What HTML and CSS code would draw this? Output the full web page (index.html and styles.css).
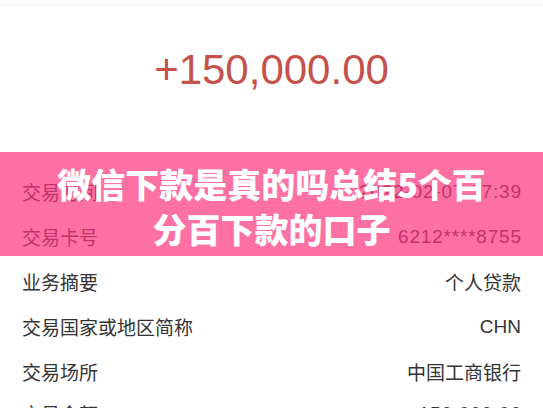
FILE: index.html
```html
<!DOCTYPE html>
<html lang="zh-CN">
<head>
<meta charset="utf-8">
<link rel="stylesheet" href="styles.css">
</head>
<body>
<div class="page">
  <div class="topbar"></div>
  <div class="amount">+150,000.00</div>
  <div class="rows">
    <div class="row"><span class="label">交易时间</span><span class="value num">2022-02-07 17:39</span></div>
    <div class="row"><span class="label">交易卡号</span><span class="value num">6212****8755</span></div>
    <div class="row"><span class="label">业务摘要</span><span class="value">个人贷款</span></div>
    <div class="row"><span class="label">交易国家或地区简称</span><span class="value">CHN</span></div>
    <div class="row"><span class="label">交易场所</span><span class="value">中国工商银行</span></div>
    <div class="row"><span class="label">交易金额</span><span class="value num">150,000.00</span></div>
  </div>
  <div class="banner">
    <div class="banner-title">微信下款是真的吗总结5个百<br>分百下款的口子</div>
  </div>
</div>
</body>
</html>
```
FILE: styles.css
```css
html, body {
  margin: 0;
  padding: 0;
  background: #ffffff;
}
.page {
  position: relative;
  width: 543px;
  height: 408px;
  overflow: hidden;
  background: #ffffff;
  font-family: "Liberation Sans", "Noto Sans CJK SC", sans-serif;
}
.topbar {
  height: 4px;
  border-bottom: 1px solid #ececec;
}
.amount {
  padding-top: 41px;
  height: 164px;
  box-sizing: border-box;
  text-align: center;
  font-size: 42px;
  line-height: 48px;
  color: #c4514a;
  font-family: "Liberation Sans", sans-serif;
}
.rows {
  display: flex;
  flex-direction: column;
}
.row {
  display: flex;
  justify-content: space-between;
  align-items: center;
  height: 45px;
  padding: 0 22px;
  font-size: 19px;
  color: #333333;
}
.row:last-child {
  margin-top: -3px;
}
.num {
  letter-spacing: 0.8px;
  margin-right: -0.8px;
}
.banner {
  position: absolute;
  left: 0;
  top: 152px;
  width: 543px;
  height: 104px;
  background: rgba(252, 51, 126, 0.7);
  display: flex;
  justify-content: center;
  align-items: center;
}
.banner-title {
  color: #ffffff;
  font-family: "Noto Sans CJK SC", sans-serif;
  font-weight: 900;
  font-size: 34px;
  line-height: 45px;
  text-align: center;
  margin-top: 4px;
}
```
